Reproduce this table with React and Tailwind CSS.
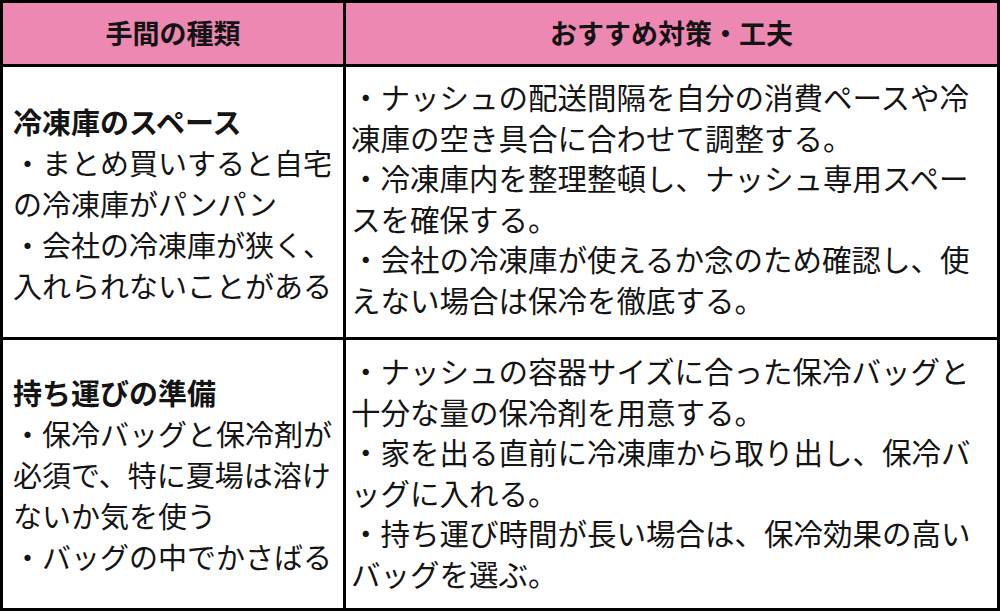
import React from "react";

const rows = [
  {
    title: "冷凍庫のスペース",
    left: ["・まとめ買いすると自宅", "の冷凍庫がパンパン", "・会社の冷凍庫が狭く、", "入れられないことがある"],
    right: [
      "・ナッシュの配送間隔を自分の消費ペースや冷",
      "凍庫の空き具合に合わせて調整する。",
      "・冷凍庫内を整理整頓し、ナッシュ専用スペー",
      "スを確保する。",
      "・会社の冷凍庫が使えるか念のため確認し、使",
      "えない場合は保冷を徹底する。",
    ],
    leftPad: "pt-[34px]",
    rightPad: "pt-[9px]",
  },
  {
    title: "持ち運びの準備",
    left: ["・保冷バッグと保冷剤が", "必須で、特に夏場は溶け", "ないか気を使う", "・バッグの中でかさばる"],
    right: [
      "・ナッシュの容器サイズに合った保冷バッグと",
      "十分な量の保冷剤を用意する。",
      "・家を出る直前に冷凍庫から取り出し、保冷バ",
      "ッグに入れる。",
      "・持ち運び時間が長い場合は、保冷効果の高い",
      "バッグを選ぶ。",
    ],
    leftPad: "pt-[32px]",
    rightPad: "pt-[10px]",
  },
];

export default function App() {
  return (
    <div className="w-[1000px] h-[613px] bg-white font-['Noto_Sans_CJK_JP',sans-serif] text-[#141414]">
      <div className="grid w-[1000px] grid-cols-[340px_651px] grid-rows-[61px_270px_268px] gap-[3px] bg-black p-[3px]">
        <div className="flex items-center justify-center bg-[#ed88b2] text-[27px] font-bold">
          手間の種類
        </div>
        <div className="flex items-center justify-center bg-[#ed88b2] text-[27px] font-bold">
          おすすめ対策・工夫
        </div>

        {rows.map((row) => (
          <React.Fragment key={row.title}>
            <div className={`bg-white pl-[10px] text-[29px] leading-[41px] ${row.leftPad}`}>
              <div className="whitespace-nowrap font-bold">{row.title}</div>
              {row.left.map((line) => (
                <div key={line} className="whitespace-nowrap">
                  {line}
                </div>
              ))}
            </div>
            <div className={`bg-white pl-[5px] text-[29.5px] leading-[40.5px] ${row.rightPad}`}>
              {row.right.map((line) => (
                <div key={line} className="whitespace-nowrap">
                  {line}
                </div>
              ))}
            </div>
          </React.Fragment>
        ))}
      </div>
    </div>
  );
}
